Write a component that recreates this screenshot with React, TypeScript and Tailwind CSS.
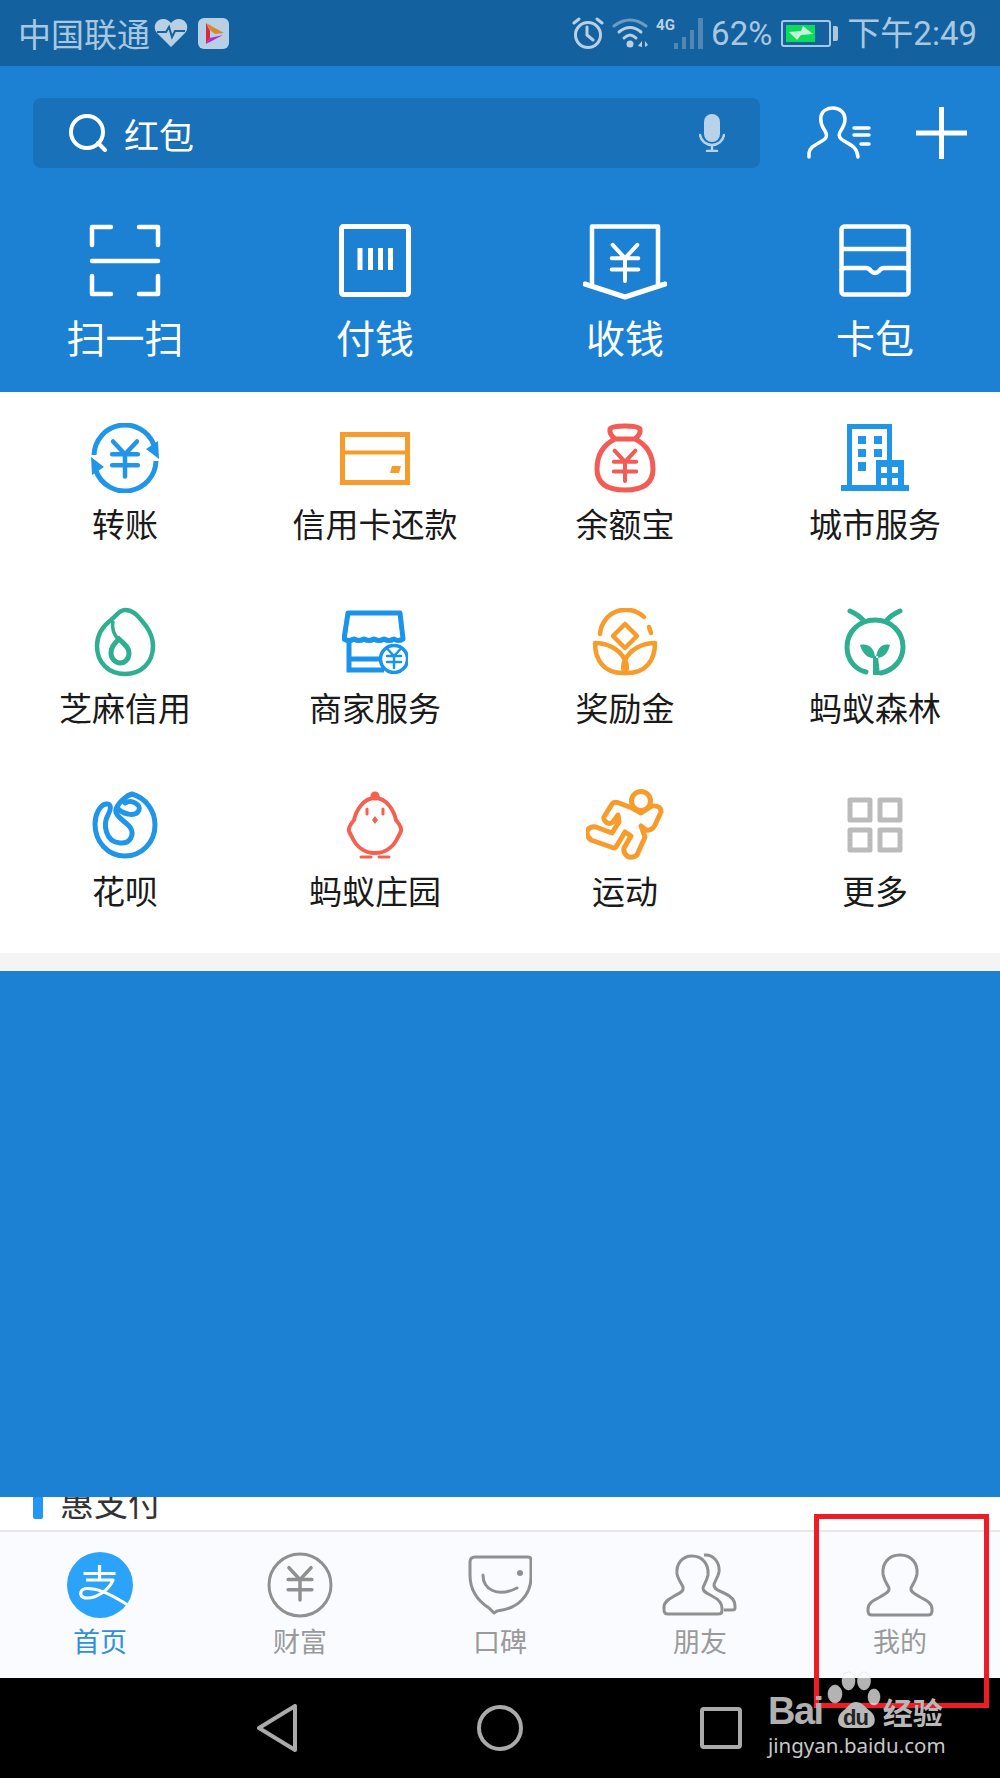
const cjk = "font-['Noto_Sans_CJK_SC','Noto_Sans',sans-serif]";

function Yen({ x, y, s = 1, color, w = 4 }: { x: number; y: number; s?: number; color: string; w?: number }) {
  return (
    <path
      transform={`translate(${x} ${y}) scale(${s})`}
      d="M-13 -18 L0 -4 L13 -18 M-14 -4 H14 M-14 8 H14 M0 -4 V20"
      fill="none"
      stroke={color}
      strokeWidth={w / s}
      strokeLinecap="round"
      strokeLinejoin="round"
    />
  );
}

// header shortcuts
function ScanIcon() {
  return (
    <svg width="72" height="73" viewBox="0 0 72 73" fill="none" stroke="#fff" strokeWidth="4.5" strokeLinecap="round" strokeLinejoin="round">
      <path d="M22 3H3V21M50 3H69V21M3 52V70H22M69 52V70H50" />
      <path d="M3 37H69" />
    </svg>
  );
}
function PayIcon() {
  return (
    <svg width="72" height="73" viewBox="0 0 72 73" fill="none" stroke="#fff">
      <rect x="2.5" y="2.5" width="67" height="68" rx="2" strokeWidth="5" />
      <path d="M21 24V46M31.5 24V46M41.500 24V46M51.500 24V46" strokeWidth="5" />
    </svg>
  );
}
function ReceiveIcon() {
  return (
    <svg width="84" height="76" viewBox="0 0 84 76" fill="none" stroke="#fff" strokeLinecap="round" strokeLinejoin="round">
      <path d="M9 60V2.500H75V60" strokeWidth="4.500" />
      <path d="M2 60L42 73L82 60" strokeWidth="5" />
      <Yen x={42} y={38} s={0.95} color="#fff" w={4} />
    </svg>
  );
}
function CardBagIcon() {
  return (
    <svg width="72" height="73" viewBox="0 0 72 73" fill="none" stroke="#fff" strokeWidth="4.500" strokeLinejoin="round">
      <rect x="2.500" y="2.500" width="67" height="68" rx="3" />
      <path d="M2.500 25H69.500" />
      <path d="M2.500 47Q3 44 7 44H27Q30 44 32 47Q36 51 40 47Q42 44 45 44H65Q69 44 69.500 47" />
    </svg>
  );
}

// service grid
function TransferIcon() {
  return (
    <svg width="70" height="70" viewBox="0 0 70 70" fill="none">
      <path d="M4 32A31 31 0 0 1 64 22" stroke="#2196e8" strokeWidth="5" />
      <path d="M66 38A31 31 0 0 1 6 48" stroke="#2196e8" strokeWidth="5" />
      <path d="M56 26L69 36L68 18Z M14 44L1 34L2 52Z" fill="#2196e8" />
      <Yen x={35} y={35} s={0.92} color="#2196e8" w={4.500} />
    </svg>
  );
}
function CreditIcon() {
  return (
    <svg width="70" height="53" viewBox="0 0 70 53" fill="none">
      <rect x="2.500" y="2.500" width="65" height="48" stroke="#f79b2b" strokeWidth="5" />
      <path d="M2 20.500H68" stroke="#f79b2b" strokeWidth="4" />
      <path d="M50 41L52 34H61L59 41Z" fill="#f79b2b" />
    </svg>
  );
}
function BagIcon() {
  return (
    <svg width="62" height="70" viewBox="0 0 62 70" fill="none">
      <path
        d="M21 16Q15 11 16 6Q18 3 31 3Q44 3 46 6Q47 11 41 16Q59 25 59 46Q59 67 31 67Q3 67 3 46Q3 25 21 16Z M21 16H41"
        stroke="#f25c54"
        strokeWidth="5"
        strokeLinejoin="round"
      />
      <Yen x={31} y={42} s={0.8} color="#f25c54" w={4} />
    </svg>
  );
}
function CityIcon() {
  return (
    <svg width="68" height="68" viewBox="0 0 68 68">
      <path d="M6 0H51V36H63V61H68V67H0V61H6ZM11 5V61H35V36H46V5Z" fill="#2196e8" fillRule="evenodd" />
      <path d="M17 12h8v8h-8zM33 12h8v8h-8zM17 25h8v8h-8zM33 25h8v8h-8zM17 38h8v9h-8z" fill="#2196e8" />
      <path d="M35 36H63V61H35Z" fill="#2196e8" />
      <path d="M40 43h6v6h-6zM51 43h6v6h-6zM40 54h6v7h-6zM51 54h6v7h-6z" fill="#fff" />
    </svg>
  );
}
function ZhimaIcon() {
  return (
    <svg width="62" height="70" viewBox="0 0 62 70" fill="none" stroke="#2eaf8f">
      <path d="M31 3C41 3 46 12 52 19C57 26 59 32 59 39C59 56 47 67 31 67C15 67 3 56 3 39C3 28 9 19 17 13C22 9 25 3 31 3Z" strokeWidth="4.500" />
      <path d="M19 14C17 24 22 30 25 33" strokeWidth="3.500" />
      <path d="M25 32C19 38 17 41 17 46C17 52 22 56 26 56C31 56 35 52 35 46C35 40 30 37 25 32Z" strokeWidth="5" />
    </svg>
  );
}
function ShopIcon() {
  return (
    <svg width="66" height="64" viewBox="0 0 66 64" fill="none" stroke="#1a94ea">
      <path d="M6 3H58L61 29Q56 32 52 29Q47 32 42 29Q37 32 32 29Q27 32 22 29Q17 32 12 29Q7 32 2 29Z" strokeWidth="5" strokeLinejoin="round" />
      <path d="M7 32V60H42M7 49H38" strokeWidth="5" />
      <circle cx="52" cy="49" r="13.500" fill="#fff" strokeWidth="3.500" />
      <Yen x={52} y={48} s={0.5} color="#1a94ea" w={2.500} />
    </svg>
  );
}
function RewardIcon() {
  return (
    <svg width="66" height="68" viewBox="0 0 66 68" fill="none" stroke="#f79b2b" strokeLinecap="round" strokeLinejoin="round" strokeWidth="4.500">
      <path d="M8 26A26 26 0 0 1 52 9" />
      <path d="M57 19L59 25" />
      <path d="M33 16L45 28L33 40L21 28Z" />
      <path d="M3 35C14 35 27 40 33 52C37 60 33 65 33 65C12 66 3 52 3 35Z" />
      <path d="M63 35C52 35 39 40 33 52C29 60 33 65 33 65C54 66 63 52 63 35Z" />
    </svg>
  );
}
function ForestIcon() {
  return (
    <svg width="62" height="68" viewBox="0 0 62 68" fill="none">
      <path d="M22 64C10 61 3 51 3 39C3 24 15 12 31 12C47 12 59 24 59 39C59 52 50 62 37 65" stroke="#2eaf8f" strokeWidth="5" strokeLinecap="round" />
      <path d="M6 3Q15 7 20 13M56 3Q47 7 42 13" stroke="#2eaf8f" strokeWidth="5" strokeLinecap="round" />
      <path d="M16 37C24 35 31 40 31 50C23 51 18 44 16 37ZM46 37C38 35 33 40 32 50C41 50 44 44 46 37ZM29 48H34L36 67H29Z" fill="#2eaf8f" />
    </svg>
  );
}
function HuabeiIcon() {
  return (
    <svg width="66" height="68" viewBox="0 0 66 68" fill="none" stroke="#2196e8" strokeWidth="5" strokeLinecap="round" strokeLinejoin="round">
      <path d="M40 3C54 7 63 20 63 34C63 52 49 65 33 65C16 65 3 51 3 33C3 23 8 14 14 13C20 12 19 19 16 24C11 33 13 51 28 52C38 53 43 44 38 36C33 30 22 25 24 18C27 10 36 4 40 3Z" />
      <path d="M26 18C33 24 44 26 47 19C49 14 40 8 33 12" />
    </svg>
  );
}
function ChickIcon() {
  return (
    <svg width="58" height="68" viewBox="0 0 58 68" fill="none">
      <path d="M29 7C41 7 48 20 50 29C53 33 56 36 55 40C54 43 53 44 52 46C48 55 40 62 29 62C18 62 10 55 6 46C5 44 4 43 3 40C2 36 5 33 8 29C10 20 17 7 29 7Z" stroke="#f5604f" strokeWidth="4" strokeLinejoin="round" />
      <circle cx="29" cy="5" r="4.500" fill="#f5604f" />
      <path d="M15 66H25M33 66H43" stroke="#f5604f" strokeWidth="3" strokeLinecap="round" />
      <path d="M21 18V23M37 18V23" stroke="#f5604f" strokeWidth="3" strokeLinecap="round" />
      <path d="M29 25L32 29L29 33L26 29Z" fill="#f5604f" />
    </svg>
  );
}
function RunIcon() {
  return (
    <svg width="78" height="72" viewBox="0 0 78 72" fill="none" stroke="#f79b2b" strokeWidth="5" strokeLinejoin="round">
      <path d="M26 15Q28 12 33 14L46 19L55 24L66 17Q75 16 75 23L69 36Q66 42 60 41L55 37L59 48L51 66Q46 70 41 67Q37 63 38 59L45 47L39 43L30 58Q28 60 25 58L5 51Q0 47 1 42Q4 37 10 38L26 44L33 33L32 26L27 33Q23 36 20 33Q17 30 18 28Z" />
      <circle cx="55" cy="12" r="9.500" fill="#fff" />
    </svg>
  );
}
function MoreIcon() {
  return (
    <svg width="56" height="56" viewBox="0 0 56 56" fill="none" stroke="#bbbbbb" strokeWidth="5" strokeLinejoin="round">
      <rect x="3" y="3" width="20" height="20" />
      <rect x="33" y="3" width="20" height="20" />
      <rect x="3" y="33" width="20" height="20" />
      <rect x="33" y="33" width="20" height="20" />
    </svg>
  );
}

// tab bar
function AlipayLogo() {
  return (
    <svg width="66" height="66" viewBox="0 0 66 66" fill="none">
      <circle cx="33" cy="33" r="33" fill="#2ca3fb" />
      <path d="M16.500 21.500H48.500M32.500 13V28M19 28H46C42 38 30 46 20 46C14 46 13 42 14 40C15 36 20 36 26 37C36 38 48 45 60 52.500" stroke="#fff" strokeWidth="3.200" strokeLinejoin="round" />
    </svg>
  );
}
function WealthIcon() {
  return (
    <svg width="66" height="66" viewBox="0 0 66 66" fill="none">
      <circle cx="33" cy="33" r="31" stroke="#909090" strokeWidth="3" />
      <Yen x={33} y={31} s={0.85} color="#909090" w={3.500} />
    </svg>
  );
}
function KoubeiIcon() {
  return (
    <svg width="64" height="60" viewBox="0 0 64 60" fill="none" stroke="#909090" strokeWidth="3" strokeLinejoin="round">
      <path d="M7 2H60Q63 2 63 5V22C63 40 50 54 29 56L26 58L21 53C10 46 2 36 2 20V7Q2 2 7 2Z" />
      <path d="M15 20C15 34 29 43 49 33" strokeLinecap="round" />
      <circle cx="52" cy="18" r="3" fill="#909090" stroke="none" />
    </svg>
  );
}
function FriendsIcon() {
  return (
    <svg width="76" height="64" viewBox="0 0 76 64" fill="none" stroke="#909090" strokeWidth="3" strokeLinejoin="round">
      <path d="M30 3C41 3 47 12 46 22C45 28 42 31 41 35C41 39 45 40 50 43C56 46 60 49 60 55V58Q60 61 56 61H6Q2 61 2 57V54C2 48 9 45 14 42C19 40 22 38 21 34C19 30 16 26 15 21C14 11 20 3 30 3Z" />
      <path d="M42 2C51 1 58 9 57 19C56 25 52 29 52 32C52 36 57 38 62 40C69 43 73 47 73 53V55Q73 57 70 57H62" />
    </svg>
  );
}
function MeIcon() {
  return (
    <svg width="68" height="64" viewBox="0 0 68 64" fill="none" stroke="#909090" strokeWidth="3" strokeLinejoin="round">
      <path d="M34 2C46 2 52 11 51 21C50 27 47 31 45 35C44 39 49 41 54 44C60 47 66 50 66 56V58Q66 62 62 62H6Q2 62 2 58V56C2 50 8 47 14 44C19 41 24 39 23 35C21 31 18 27 17 21C16 11 22 2 34 2Z" />
    </svg>
  );
}

const quick = [
  { label: "扫一扫", icon: <ScanIcon /> },
  { label: "付钱", icon: <PayIcon /> },
  { label: "收钱", icon: <ReceiveIcon /> },
  { label: "卡包", icon: <CardBagIcon /> },
];

const services = [
  { label: "转账", icon: <TransferIcon /> },
  { label: "信用卡还款", icon: <CreditIcon /> },
  { label: "余额宝", icon: <BagIcon /> },
  { label: "城市服务", icon: <CityIcon /> },
  { label: "芝麻信用", icon: <ZhimaIcon /> },
  { label: "商家服务", icon: <ShopIcon /> },
  { label: "奖励金", icon: <RewardIcon /> },
  { label: "蚂蚁森林", icon: <ForestIcon /> },
  { label: "花呗", icon: <HuabeiIcon /> },
  { label: "蚂蚁庄园", icon: <ChickIcon /> },
  { label: "运动", icon: <RunIcon /> },
  { label: "更多", icon: <MoreIcon /> },
];

const tabs = [
  { label: "财富", icon: <WealthIcon /> },
  { label: "口碑", icon: <KoubeiIcon /> },
  { label: "朋友", icon: <FriendsIcon /> },
  { label: "我的", icon: <MeIcon /> },
];

function StatusBar() {
  return (
    <div className="flex h-[66px] items-center justify-between bg-[#14619f] pl-[18px] pr-[23px] text-[#a9c8e0]">
      <div className="flex items-center">
        <span className="text-[33px] leading-none">中国联通</span>
        <svg width="34" height="30" viewBox="0 0 34 30" className="ml-[4px]">
          <path d="M17 29L3 15C-2 9 2 1 9 1C13 1 15 3 17 5C19 3 21 1 25 1C32 1 36 9 31 15Z" fill="#b9d0e4" />
          <path d="M3 14H12L15 9L18 19L21 13H31" stroke="#14619f" strokeWidth="2" fill="none" />
        </svg>
        <svg width="31" height="31" viewBox="0 0 31 31" className="ml-[10px]">
          <rect width="31" height="31" rx="6" fill="#b9d0e4" />
          <path d="M8 5L26 15L17 16L12 12Z" fill="#d68a2a" />
          <path d="M8 5L12 13V20L8 26Z" fill="#d8283f" />
          <path d="M12 20L25 17L8 26Z" fill="#a92be0" />
        </svg>
      </div>
      <div className="flex items-center">
        <svg width="32" height="32" viewBox="0 0 32 32" fill="none" stroke="#b9d0e4" strokeWidth="3" strokeLinecap="round">
          <circle cx="16" cy="18" r="12.500" />
          <path d="M15 10V18L21 23M2 6L7 2M30 6L25 2" />
        </svg>
        <svg width="36" height="32" viewBox="0 0 36 32" fill="none" className="ml-[8px]" strokeLinecap="round">
          <path d="M2 9Q18 -3 34 9" stroke="#6a9cc4" strokeWidth="3" />
          <path d="M7 15Q18 6 29 15M12 21Q18 15 24 21" stroke="#b9d0e4" strokeWidth="3" />
          <circle cx="18" cy="27" r="3.500" fill="#b9d0e4" />
          <path d="M26 29L30 24V30ZM33 24L36 28L33 30Z" fill="#b9d0e4" />
        </svg>
        <div className="relative ml-[8px] h-[32px] w-[50px]">
          <span className="absolute left-0 top-0 text-[15px] font-bold leading-[16px] text-[#b9d0e4] font-['Roboto',sans-serif]">4G</span>
          <svg width="34" height="32" viewBox="0 0 34 32" className="absolute right-0 top-0" fill="#5287b4">
            <rect x="2" y="26" width="4" height="6" />
            <rect x="10" y="20" width="4" height="12" />
            <rect x="18" y="13" width="4" height="19" />
            <rect x="26" y="1" width="5" height="31" />
          </svg>
        </div>
        <span className="ml-[5px] text-[33px] leading-none font-['Roboto',sans-serif]">62%</span>
        <div className="ml-[9px] flex items-center">
          <div className="flex h-[27px] w-[50px] items-center rounded-[3px] border-2 border-[#a9c8e0] p-[3px]">
            <div className="flex h-full w-[29px] items-center justify-center bg-[#0bdc5c]">
              <svg width="24" height="14" viewBox="0 0 24 14">
                <path d="M0 6L12 5L14 0L24 8L12 9L8 14Z" fill="#c8f3d8" />
              </svg>
            </div>
          </div>
          <div className="ml-[2px] h-[15px] w-[5px] rounded-r-[2px] bg-[#a9c8e0]" />
        </div>
        <span className="ml-[9px] text-[33px] leading-none font-['Roboto','Noto_Sans_CJK_SC',sans-serif]">下午2:49</span>
      </div>
    </div>
  );
}

export default function App() {
  return (
    <div className={`relative flex h-[1778px] w-[1000px] flex-col overflow-hidden bg-white ${cjk}`}>
      <StatusBar />

      {/* blue header */}
      <div className="h-[326px] bg-[#1c80d3]">
        <div className="flex items-center pl-[33px] pt-[32px]">
          <div className="flex h-[70px] w-[727px] items-center rounded-[8px] bg-[#1971b9] pl-[36px] pr-[35px]">
            <svg width="38" height="38" viewBox="0 0 38 38" fill="none" stroke="#fff" strokeWidth="4" strokeLinecap="round">
              <circle cx="18" cy="18" r="16" />
              <path d="M29 29L36 36" />
            </svg>
            <span className="ml-[17px] text-[35px] leading-none text-white">红包</span>
            <svg width="26" height="38" viewBox="0 0 26 38" className="ml-auto" fill="none">
              <rect x="5" y="0" width="16" height="28" rx="8" fill="#b9d2e8" />
              <path d="M1 21C2 27 7 31 13 31C19 31 24 27 25 21M13 31V36M8 37H18" stroke="#b9d2e8" strokeWidth="2.500" strokeLinecap="round" />
            </svg>
          </div>
          <svg width="64" height="54" viewBox="0 0 64 54" fill="none" stroke="#fff" strokeWidth="3.500" strokeLinecap="round" strokeLinejoin="round" className="ml-[47px]">
            <path d="M2 51V47C3 41 8 39 15 35C19 33 21 30 18 25C14 19 13 15 14 10C15 5 20 2 26 2C33 2 38 7 38 13C38 19 35 23 33 26C31 30 33 33 37 35C44 39 50 41 51 51" />
            <path d="M47 22H62M47 29H62M54 38H62" />
          </svg>
          <svg width="51" height="52" viewBox="0 0 51 52" stroke="#fff" strokeWidth="5" className="ml-[45px]">
            <path d="M25.500 0V52M0 26H51" />
          </svg>
        </div>
        <div className="mt-[56px] grid grid-cols-4">
          {quick.map((q) => (
            <div key={q.label} className="flex flex-col items-center">
              <div className="flex h-[76px] items-start">{q.icon}</div>
              <span className="mt-[11px] text-[39px] leading-[50px] text-white">{q.label}</span>
            </div>
          ))}
        </div>
      </div>

      {/* services */}
      <div className="grid h-[561px] grid-cols-4 content-start gap-y-[60.500px] pt-[30px]">
        {services.map((s) => (
          <div key={s.label} className="flex flex-col items-center">
            <div className="flex h-[72px] items-center justify-center">{s.icon}</div>
            <span className="mt-[7px] text-[33px] leading-[44px] text-[#1a1a1a]">{s.label}</span>
          </div>
        ))}
      </div>

      <div className="h-[18px] bg-[#f4f4f4]" />
      <div className="h-[526px] bg-[#1c80d3]" />

      {/* partly hidden list title */}
      <div className="flex h-[33px] items-end overflow-hidden bg-white pb-[11px] pl-[33px]">
        <div className="h-full w-[10px] rounded-b-[2px] bg-[#2196f3]" />
        <span className="ml-[17px] text-[34px] leading-[34px] text-[#333333]">惠支付</span>
      </div>

      {/* tab bar */}
      <div className="grid h-[148px] grid-cols-5 border-t-2 border-[#e8e8e8] bg-[#f9fbfe] pt-[20px]">
        <div className="flex flex-col items-center">
          <AlipayLogo />
          <span className="mt-[5px] text-[27px] leading-[36px] text-[#2f8fdc]">首页</span>
        </div>
        {tabs.map((t) => (
          <div key={t.label} className="flex flex-col items-center">
            <div className="flex h-[66px] items-center">{t.icon}</div>
            <span className="mt-[5px] text-[27px] leading-[36px] text-[#9a9a9a]">{t.label}</span>
          </div>
        ))}
      </div>

      {/* android nav */}
      <div className="flex h-[100px] flex-1 items-center bg-black pl-[256px]">
        <svg width="42" height="48" viewBox="0 0 42 48" fill="none" stroke="#aaaaaa" strokeWidth="4" strokeLinejoin="round">
          <path d="M3 24L39 2V46Z" />
        </svg>
        <svg width="48" height="48" viewBox="0 0 48 48" fill="none" stroke="#aaaaaa" strokeWidth="4" className="ml-[178px]">
          <circle cx="24" cy="24" r="21" />
        </svg>
        <svg width="42" height="42" viewBox="0 0 42 42" fill="none" stroke="#aaaaaa" strokeWidth="4" strokeLinejoin="round" className="ml-[176px]">
          <rect x="2" y="2" width="38" height="38" rx="2" />
        </svg>
      </div>

      {/* red annotation */}
      <div className="absolute left-[814px] top-[1514px] h-[194px] w-[175px] border-[5px] border-[#ee1c25]" />

      {/* watermark */}
      <div className="absolute left-[768px] top-[1670px] w-[180px]">
        <div className="absolute left-[57px] top-0 h-[60px] w-[58px]">
          <svg width="58" height="60" viewBox="0 0 58 60">
            <g fill="#fff" fillOpacity="0.7" stroke="#d8d8d8" strokeOpacity="0.5">
              <ellipse cx="10" cy="24" rx="7" ry="9" />
              <ellipse cx="23.500" cy="11" rx="6.500" ry="9" />
              <ellipse cx="39" cy="11" rx="6.500" ry="9" />
              <ellipse cx="49" cy="27" rx="6" ry="8" />
            </g>
            <path d="M31 32C25 32 23 37 18 41C11 46 11 58 22 58H41C52 58 52 46 45 41C40 37 37 32 31 32Z" fill="#b8b8b8" />
          </svg>
          <span className="absolute left-[18px] top-[37px] font-['Liberation_Sans',sans-serif] text-[22px] font-bold leading-[22px] tracking-[-1px] text-[#222222]">du</span>
        </div>
        <div className="flex items-end pt-[23px]">
          <span className="font-['Liberation_Sans',sans-serif] text-[38px] font-bold leading-[36px] tracking-[-1.500px] text-[#b0b0b0]">Bai</span>
          <span className="ml-[60px] text-[30px] font-bold leading-[36px] text-[#b8b8b8]">经验</span>
        </div>
        <div className="mt-[2px] font-['Noto_Sans',sans-serif] text-[20.500px] leading-[28px] text-[#c8c8c8]">jingyan.baidu.com</div>
      </div>
    </div>
  );
}
